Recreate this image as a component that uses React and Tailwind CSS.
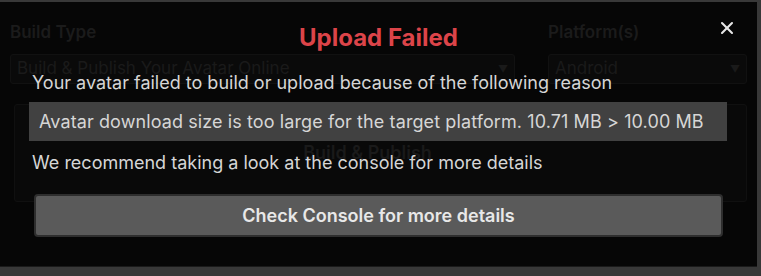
import { X } from "lucide-react";

function BackgroundPanel() {
  // dimmed builder UI behind the modal
  return (
    <div className="flex flex-col px-[10px] pt-[18px]">
      <div className="flex gap-[33px]">
        <div className="flex w-[505px] flex-col gap-[10px]">
          <span className="text-[17px] font-semibold leading-[24px] text-[#1b1b1b]">Build Type</span>
          <div className="flex h-[30px] items-center justify-between rounded-[3px] border border-[#111] bg-[#0a0a0a] px-[6px]">
            <span className="text-[17px] text-[#1a1a1a]">Build &amp; Publish Your Avatar Online</span>
            <span className="text-[10px] text-[#1a1a1a]">▼</span>
          </div>
        </div>
        <div className="flex flex-1 flex-col gap-[10px]">
          <span className="text-[17px] font-semibold leading-[24px] text-[#1b1b1b]">Platform(s)</span>
          <div className="flex h-[30px] items-center justify-between rounded-[3px] border border-[#111] bg-[#0a0a0a] px-[6px]">
            <span className="text-[17px] text-[#1a1a1a]">Android</span>
            <span className="text-[10px] text-[#1a1a1a]">▼</span>
          </div>
        </div>
      </div>
      <div className="mt-[20px] ml-[4px] flex h-[98px] items-start justify-center rounded-[3px] border border-[#101010] bg-[#090909] pt-[34px]">
        <span className="mr-[26px] text-[18px] font-semibold text-[#1a1a1a]">Build &amp; Publish</span>
      </div>
    </div>
  );
}

export default function App() {
  return (
    <div className="h-[276px] w-[761px] overflow-hidden bg-[#383838] pt-[2px] pr-[4px] pb-[9px] font-['Inter',sans-serif]">
      <div className="relative h-full border-b border-[#1a1a1a] bg-[#060606]">
        <BackgroundPanel />

        {/* Modal */}
        <div className="absolute inset-0 flex flex-col px-[29px] pt-[22px]">
          <button className="absolute right-[20px] top-[16px] text-[#e6e6e6]">
            <X size={20} strokeWidth={2.5} />
          </button>
          <h2 className="text-center text-[24px] font-bold leading-[28px] text-[#dc4449]">
            Upload Failed
          </h2>
          <p className="mt-[19px] px-[3px] text-[18px] leading-[24px] text-[#d6d6d6]">
            Your avatar failed to build or upload because of the following reason
          </p>
          <div className="mt-[7px] mr-[1px] flex h-[39px] items-center bg-[#414141] px-[10px]">
            <span className="text-[18px] tracking-[0.1px] text-[#d6d6d6]">
              Avatar download size is too large for the target platform. 10.71 MB &gt; 10.00 MB
            </span>
          </div>
          <p className="mt-[10px] px-[3px] text-[18px] leading-[24px] text-[#d6d6d6]">
            We recommend taking a look at the console for more details
          </p>
          <button className="mx-[5px] mt-[19px] h-[43px] rounded-[4px] border-2 border-[#2e2e2e] bg-[#5a5a5a] text-[18px] font-semibold text-[#e8e8e8]">
            Check Console for more details
          </button>
        </div>
      </div>
    </div>
  );
}
